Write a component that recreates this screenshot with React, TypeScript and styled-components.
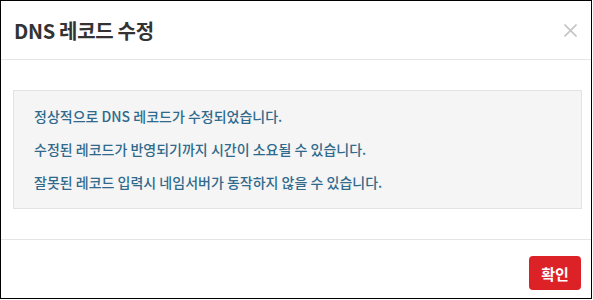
import React from "react";
import styled, { createGlobalStyle } from "styled-components";

const GlobalStyle = createGlobalStyle`
  html, body {
    margin: 0;
    padding: 0;
    background: #fff;
  }
  body {
    font-family: "Noto Sans CJK KR", "Noto Sans", sans-serif;
  }
  * {
    box-sizing: border-box;
  }
`;

const Modal = styled.div`
  width: 592px;
  height: 299px;
  border: 1px solid #000;
  background: #fff;
  display: flex;
  flex-direction: column;
`;

const Header = styled.div`
  height: 59px;
  padding: 0 14px 0 13px;
  border-bottom: 1px solid #e5e5e5;
  display: flex;
  align-items: center;
  justify-content: space-between;
`;

const Title = styled.h4`
  margin: 0;
  font-size: 20px;
  font-weight: 700;
  color: #333;
  letter-spacing: -0.3px;
`;

const CloseButton = styled.button`
  border: 0;
  background: none;
  padding: 0;
  width: 13px;
  height: 13px;
  display: flex;
  cursor: pointer;
`;

const Body = styled.div`
  padding: 30px 9px 30px 12px;
  border-bottom: 1px solid #e5e5e5;
`;

const Notice = styled.div`
  background: #f5f5f5;
  border: 1px solid #e3e3e3;
  padding: 9px 20px;
  color: #2f6a8c;
  font-size: 14px;
  font-weight: 500;
`;

const Line = styled.p`
  margin: 0;
  line-height: 33px;
`;

const Footer = styled.div`
  flex: 1;
  padding: 16px 10px 0 0;
  display: flex;
  justify-content: flex-end;
  align-items: flex-start;
`;

const ConfirmButton = styled.button`
  width: 52px;
  height: 34px;
  border: 0;
  border-radius: 4px;
  background: #dc2127;
  color: #fff;
  font-family: "Noto Sans CJK KR", sans-serif;
  font-size: 15px;
  font-weight: 700;
  cursor: pointer;
`;

const lines = [
  "정상적으로 DNS 레코드가 수정되었습니다.",
  "수정된 레코드가 반영되기까지 시간이 소요될 수 있습니다.",
  "잘못된 레코드 입력시 네임서버가 동작하지 않을 수 있습니다.",
];

const App = () => {
  return (
    <>
      <GlobalStyle />
      <Modal>
        <Header>
          <Title>DNS 레코드 수정</Title>
          <CloseButton aria-label="닫기">
            <svg width="13" height="13" viewBox="0 0 13 13">
              <path
                d="M0.5 0.5 L12.5 12.5 M12.5 0.5 L0.5 12.5"
                stroke="#c4c4c4"
                strokeWidth="1.6"
              />
            </svg>
          </CloseButton>
        </Header>
        <Body>
          <Notice>
            {lines.map((text) => (
              <Line key={text}>{text}</Line>
            ))}
          </Notice>
        </Body>
        <Footer>
          <ConfirmButton>확인</ConfirmButton>
        </Footer>
      </Modal>
    </>
  );
};

export default App;
